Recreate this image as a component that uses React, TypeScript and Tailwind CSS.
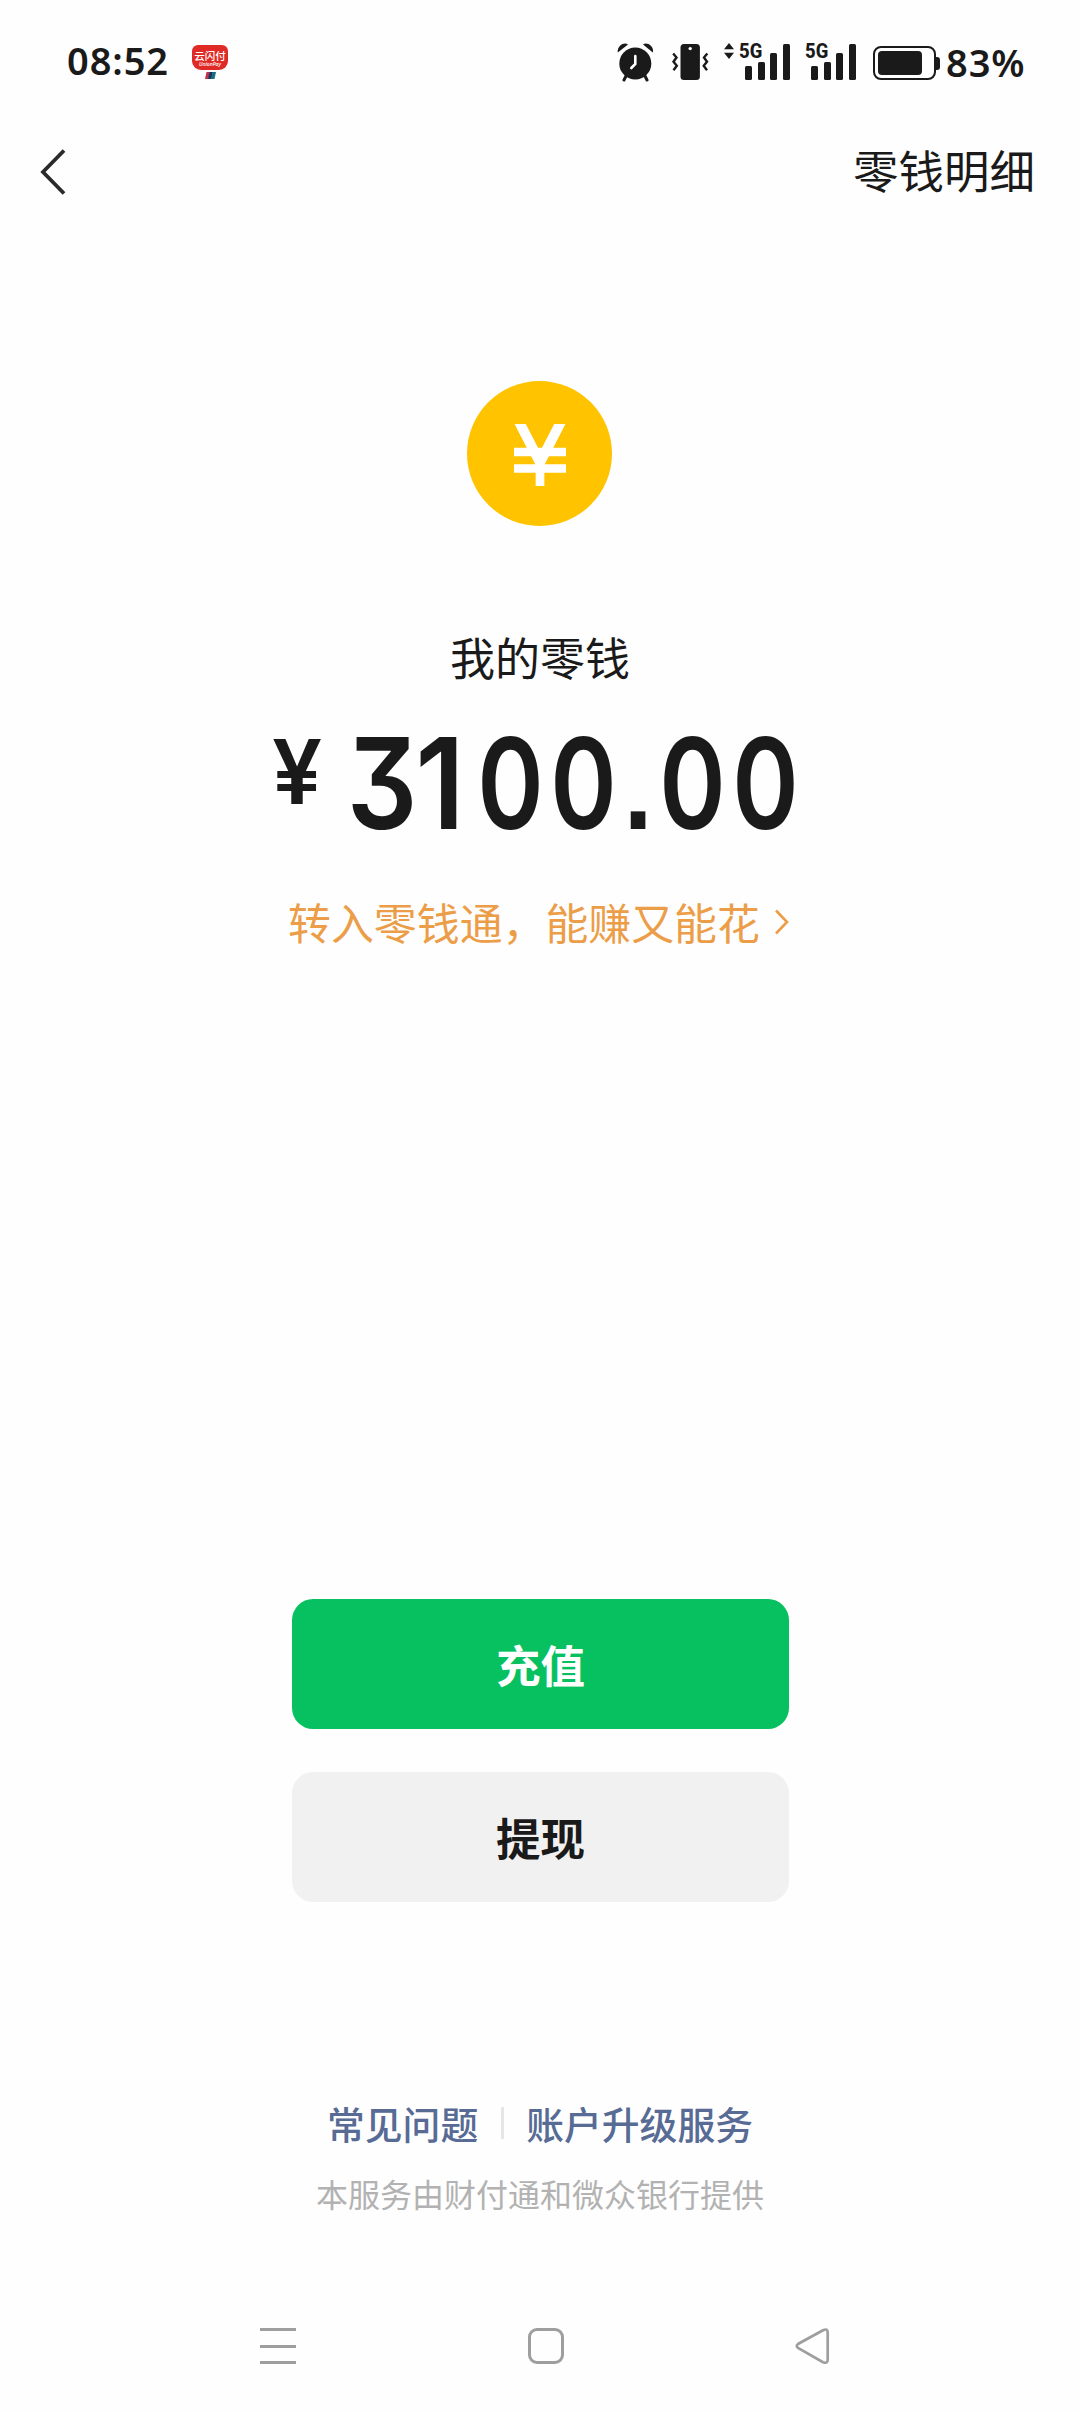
import type { ReactNode } from 'react';

const cjk = "font-['Noto_Sans_CJK_SC',sans-serif]";

function UnionPayBadge() {
  return (
    <div className="ml-[25px] mt-[45px] flex w-9 flex-col items-center">
      <div className="flex h-[25px] w-9 flex-col items-center rounded-[6px] rounded-b-[9px] bg-[#e02a26] pt-[5px] text-white">
        <span className={`${cjk} text-[10.5px] leading-[11px] font-medium whitespace-nowrap`}>云闪付</span>
        <span className="font-['Open_Sans',sans-serif] text-[5px] leading-[6px] font-semibold italic">UnionPay</span>
      </div>
      <svg className="mt-[2px]" width="11" height="7" viewBox="0 0 11 7">
        <path d="M1.5 0H5L3.500 7H0z" fill="#c2304a" />
        <path d="M4.500 0H8L6.500 7H3z" fill="#1c3262" />
        <path d="M7.500 0H11L9.500 7H6z" fill="#16717c" />
      </svg>
    </div>
  );
}

function AlarmIcon() {
  return (
    <svg width="37" height="39" viewBox="0 0 37 39" fill="none" stroke="#1a1a1a" strokeLinecap="round">
      <circle cx="18.300" cy="20.500" r="16" fill="#1a1a1a" stroke="none" />
      <path d="M0.800 9.500C-.5 3.500 7-2 11 1.500z" fill="#1a1a1a" stroke="none" />
      <path d="M35.800 9.500C37.500 3.500 30-2 26 1.500z" fill="#1a1a1a" stroke="none" />
      <path d="M9.500 32L7 37M27.500 32l2.500 5" strokeWidth="3" />
      <path d="M18.300 13v8l-4 4" stroke="#fff" strokeWidth="2.600" />
    </svg>
  );
}

function VibrateIcon() {
  return (
    <svg width="37" height="36" viewBox="0 0 37 36" fill="none" stroke="#1a1a1a" strokeWidth="2.400">
      <rect x="8.500" y="0" width="19.400" height="36" rx="3.500" fill="#1a1a1a" stroke="none" />
      <circle cx="18.200" cy="4.600" r="1.700" fill="#fff" stroke="none" />
      <path d="M1.200 9.500l3.300 4-3 4.200 3.300 4.100-3.300 4.400M35.300 9.500l-3.300 4 3 4.200-3.300 4.100 3.300 4.400" />
    </svg>
  );
}

function Signal() {
  return (
    <div className="relative h-9 w-[51px]">
      <span className="absolute top-0 left-0 h-[15px] origin-left scale-x-[0.900] font-['Roboto',sans-serif] text-[20.5px] leading-[15px] font-extrabold">5G</span>
      <div className="flex h-full items-end gap-[5.500px] pl-[6px]">
        <i className="h-[14px] w-[7px] shrink-0 rounded-[1.500px] bg-[#1a1a1a]" />
        <i className="h-[18px] w-[7px] shrink-0 rounded-[1.500px] bg-[#1a1a1a]" />
        <i className="h-[27px] w-[7px] shrink-0 rounded-[1.500px] bg-[#1a1a1a]" />
        <i className="h-[36px] w-[7px] shrink-0 rounded-[1.500px] bg-[#1a1a1a]" />
      </div>
    </div>
  );
}

function Battery() {
  return (
    <div className="flex items-center">
      <div className="h-[34px] w-[63px] rounded-[8px] border-[2.500px] border-[#1a1a1a] p-[3px]">
        <div className="h-6 w-[44px] rounded-[4px] bg-[#1a1a1a]" />
      </div>
      <div className="h-[13px] w-1 rounded-r-[3px] bg-[#1a1a1a]" />
    </div>
  );
}

function StatusBar() {
  return (
    <div className="flex h-[120px] items-start">
      <span className="mt-[40px] ml-[67px] w-[100px] font-['Noto_Sans',sans-serif] text-[38px] leading-[40px] font-semibold tracking-[0.900px] whitespace-nowrap">08:52</span>
      <UnionPayBadge />
      <div className="mt-[43px] ml-[389px]"><AlarmIcon /></div>
      <div className="mt-[44px] ml-[18px]"><VibrateIcon /></div>
      <svg className="mt-[43px] ml-[15px]" width="10" height="16" viewBox="0 0 10 16" fill="#1a1a1a">
        <path d="M5 0l5 6.300H0zM5 16l5-6.300H0z" />
      </svg>
      <div className="mt-[44px] ml-[5px]"><Signal /></div>
      <div className="mt-[44px] ml-[15px]"><Signal /></div>
      <div className="mt-[46px] ml-[17px]"><Battery /></div>
      <span className="mt-[42px] ml-[6px] font-['Noto_Sans',sans-serif] text-[38px] leading-[40px] font-semibold tracking-[0.900px] whitespace-nowrap">83%</span>
    </div>
  );
}

function Header() {
  return (
    <header className="flex h-[104px] items-center justify-between pr-[45px] pl-[40px]">
      <svg width="26" height="46" viewBox="0 0 26 46" fill="none" stroke="#2a2a2a" strokeWidth="3.800">
        <path d="M24 1.500L3 23l21 21.500" />
      </svg>
      <span className={`${cjk} mb-[6px] text-[45.500px] leading-[60px]`}>零钱明细</span>
    </header>
  );
}

function CoinIcon() {
  return (
    <div className="mt-[157px] mr-[1px] flex size-[145px] justify-center rounded-full bg-[#ffc300] pt-[43px]">
      <svg width="52" height="62" viewBox="0 0 52 62" fill="none" stroke="#fff">
        <path d="M3.600-5L26 38.600 48.400-5" strokeWidth="10" />
        <path d="M0 28h52M0 44.500h52" strokeWidth="8.300" />
        <path d="M26 30v32" strokeWidth="8.700" />
      </svg>
    </div>
  );
}

function Digit({ children, cell }: { children: string; cell: string }) {
  return <span className={`flex justify-center ${cell}`}>{children}</span>;
}

function Amount() {
  return (
    <div className="mt-[32px] flex h-[128px] w-full font-['Inter',sans-serif] font-semibold">
      <span className="mt-[8px] ml-[272px] w-[73px] origin-left text-[89px] leading-[90px]">¥</span>
      <div className="flex text-[126px] leading-[128px] [font-feature-settings:'cv09','ss07']">
        <Digit cell="w-[74px] scale-x-[0.880]">3</Digit>
        <Digit cell="w-[42px] mr-[13px] scale-x-[0.930]">1</Digit>
        <Digit cell="w-[73px] scale-x-[0.800]">0</Digit>
        <Digit cell="w-[73px] scale-x-[0.800]">0</Digit>
        <Digit cell="w-[36px] scale-x-[0.800]">.</Digit>
        <Digit cell="w-[73px] scale-x-[0.800]">0</Digit>
        <Digit cell="w-[73px] scale-x-[0.800]">0</Digit>
      </div>
    </div>
  );
}

function Action({ children, tone }: { children: ReactNode; tone: 'primary' | 'plain' }) {
  const look = tone === 'primary' ? 'bg-[#07c160] text-white' : 'bg-[#f1f1f1] text-[#1a1a1a]';
  return (
    <button className={`${cjk} ${look} h-[130px] w-[497px] rounded-[21px] text-[44.500px] leading-[64px] font-bold`}>
      {children}
    </button>
  );
}

function SystemNav() {
  return (
    <nav className="flex h-9 items-center pl-[260px]">
      <div className="flex h-9 w-9 flex-col justify-between">
        <i className="h-[3px] bg-[#9e9e9e]" />
        <i className="h-[3px] bg-[#9e9e9e]" />
        <i className="h-[3px] bg-[#9e9e9e]" />
      </div>
      <div className="ml-[232px] h-9 w-9 rounded-[9px] border-[3px] border-[#9e9e9e]" />
      <svg className="ml-[231px]" width="35" height="36" viewBox="0 0 35 36" fill="none" stroke="#9e9e9e" strokeWidth="2.700">
        <path d="M28 2.300L3 16Q.5 18 3 20l25 14.200Q32.700 36 32.700 31.500v-27Q32.700 0 28 2.300z" />
      </svg>
    </nav>
  );
}

export default function App() {
  return (
    <div className="flex h-[2412px] w-[1080px] flex-col overflow-hidden bg-[#fefefe] text-[#1a1a1a]">
      <StatusBar />
      <Header />
      <main className="flex flex-col items-center">
        <CoinIcon />
        <div className={`${cjk} mt-[101px] h-[60px] text-[45px] leading-[60px]`}>我的零钱</div>
        <Amount />
        <div className="mt-[44px] mr-[3px] flex items-center text-[#ec9d47]">
          <span className={`${cjk} text-[42.900px] leading-[60px]`}>转入零钱通，能赚又能花</span>
          <svg className="mt-[2px] ml-[14px]" width="15" height="26" viewBox="0 0 15 26" fill="none" stroke="currentColor" strokeWidth="2.600">
            <path d="M2 1.500L13 13 2 24.500" />
          </svg>
        </div>
        <div className="mt-[648px] ml-[1px] flex flex-col gap-[43px]">
          <Action tone="primary">充值</Action>
          <Action tone="plain">提现</Action>
        </div>
        <div className={`${cjk} mt-[195px] flex items-center text-[37.800px] leading-[52px] font-medium text-[#576b95]`}>
          <span>常见问题</span>
          <i className="mx-[22.500px] h-8 w-[3px] bg-[#e6e6e6]" />
          <span>账户升级服务</span>
        </div>
        <div className={`${cjk} mt-[22px] text-[32px] leading-[44px] text-[#b2b2b2]`}>本服务由财付通和微众银行提供</div>
      </main>
      <div className="mt-auto mb-[48px]"><SystemNav /></div>
    </div>
  );
}
